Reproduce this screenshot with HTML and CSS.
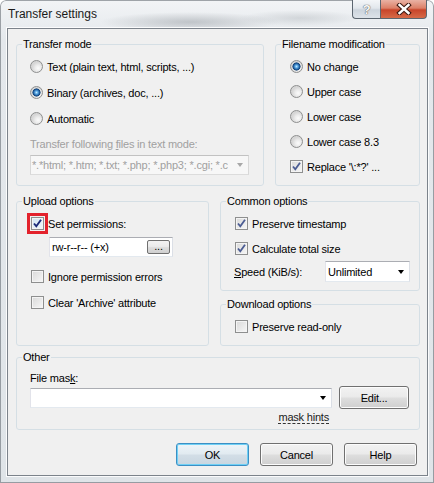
FILE: index.html
```html
<!DOCTYPE html>
<html lang="en">
<head>
  <meta charset="UTF-8">
  <title>Transfer settings</title>
  <link rel="stylesheet" href="styles.css">
</head>
<body>
  <div class="window">
    <div class="titlebar">
      <span class="title">Transfer settings</span>
      <div class="caption">
        <span class="cap-btn cap-help">?</span>
        <span class="cap-btn cap-close">
          <svg width="18" height="12" viewBox="0 0 18 12">
            <path d="M4.5 2 L13.5 10 M13.5 2 L4.5 10" stroke="#3d1a12" stroke-width="4.5" stroke-linecap="square"/>
            <path d="M4.5 2 L13.5 10 M13.5 2 L4.5 10" stroke="#fff" stroke-width="2.4" stroke-linecap="square"/>
          </svg>
        </span>
      </div>
    </div>

    <div class="client">
      <div class="row row-top">
        <fieldset class="group group-mode">
          <legend>Transfer mode</legend>
          <div class="body">
            <div class="opt"><span class="radio"></span>Text (plain text, html, scripts, ...)</div>
            <div class="opt"><span class="radio on"></span>Binary (archives, doc, ...)</div>
            <div class="opt"><span class="radio"></span>Automatic</div>
            <div class="muted">Transfer following <u>f</u>iles in text mode:</div>
            <div class="combo disabled combo-mask">
              <span class="val">*.*html; *.htm; *.txt; *.php; *.php3; *.cgi; *.c</span>
              <span class="arrow"></span>
            </div>
          </div>
        </fieldset>

        <fieldset class="group group-name">
          <legend>Filename modification</legend>
          <div class="body">
            <div class="opt"><span class="radio on"></span>No change</div>
            <div class="opt"><span class="radio"></span>Upper case</div>
            <div class="opt"><span class="radio"></span>Lower case</div>
            <div class="opt"><span class="radio"></span>Lower case 8.3</div>
            <div class="opt"><span class="check"><svg viewBox="0 0 11 11"><path d="M2 5.5 L4.3 8.3 L9 1.8" fill="none" stroke="#4b5c93" stroke-width="1.8"/></svg></span>Replace '\:*?' ...</div>
          </div>
        </fieldset>
      </div>

      <div class="row row-mid">
        <fieldset class="group group-upload">
          <legend>Upload options</legend>
          <div class="body">
            <div class="opt"><span class="check marked"><svg viewBox="0 0 11 11"><path d="M2 5.5 L4.3 8.3 L9 1.8" fill="none" stroke="#1b2a78" stroke-width="1.9"/></svg></span>Set permissions:</div>
            <div class="edit">
              <span class="val">rw-r--r-- (+x)</span>
              <span class="mini-btn">...</span>
            </div>
            <div class="opt"><span class="check"></span>Ignore permission errors</div>
            <div class="opt"><span class="check"></span>Clear 'Archive' attribute</div>
          </div>
        </fieldset>

        <div class="col-right">
          <fieldset class="group group-common">
            <legend>Common options</legend>
            <div class="body">
              <div class="opt"><span class="check"><svg viewBox="0 0 11 11"><path d="M2 5.5 L4.3 8.3 L9 1.8" fill="none" stroke="#4b5c93" stroke-width="1.8"/></svg></span>Preserve timestamp</div>
              <div class="opt"><span class="check"><svg viewBox="0 0 11 11"><path d="M2 5.5 L4.3 8.3 L9 1.8" fill="none" stroke="#4b5c93" stroke-width="1.8"/></svg></span>Calculate total size</div>
              <div class="speed">
                <span class="speed-label"><u>S</u>peed (KiB/s):</span>
                <div class="combo combo-speed">
                  <span class="val">Unlimited</span>
                  <span class="arrow"></span>
                </div>
              </div>
            </div>
          </fieldset>

          <fieldset class="group group-download">
            <legend>Download options</legend>
            <div class="body">
              <div class="opt"><span class="check"></span>Preserve read-only</div>
            </div>
          </fieldset>
        </div>
      </div>

      <fieldset class="group group-other">
        <legend>Other</legend>
        <div class="body">
          <div class="field-label">File mas<u>k</u>:</div>
          <div class="mask-row">
            <div class="mask-col">
              <div class="combo combo-file">
                <span class="val"></span>
                <span class="arrow"></span>
              </div>
              <div class="hints"><span class="link">mask hints</span></div>
            </div>
            <span class="btn btn-edit">Edit...</span>
          </div>
        </div>
      </fieldset>

      <div class="buttons">
        <span class="btn btn-default">OK</span>
        <span class="btn">Cancel</span>
        <span class="btn">Help</span>
      </div>
    </div>
  </div>
</body>
</html>
```

FILE: styles.css
```css
* {
  box-sizing: border-box;
}

body {
  margin: 0;
  background: #ffffff;
  font-family: "Liberation Sans", Arial, sans-serif;
  font-size: 11px;
  letter-spacing: -0.2px;
  color: #000;
}

/* window frame (aero glass) */
.window {
  width: 434px;
  height: 483px;
  display: flex;
  flex-direction: column;
  border-radius: 6px 6px 0 0;
  overflow: hidden;
  background:
    radial-gradient(ellipse 90px 10px at 190px 22px, rgba(140, 146, 152, 0.45), transparent),
    radial-gradient(ellipse 60px 8px at 300px 18px, rgba(160, 166, 172, 0.35), transparent),
    linear-gradient(#f2f4f6, #e4e8ec 40px, #dfe4e8);
  box-shadow: inset 0 0 0 1px rgba(90, 96, 104, 0.55);
}

.titlebar {
  height: 28px;
  flex: none;
  display: flex;
  justify-content: space-between;
  padding: 0 7px 0 8px;
}

.title {
  line-height: 28px;
  font-size: 12px;
  letter-spacing: 0;
  color: #1a1a1a;
}

.caption {
  display: flex;
  height: 19px;
}

.cap-btn {
  display: flex;
  align-items: center;
  justify-content: center;
  border: 1px solid #5c6670;
  border-top: none;
}

.cap-help {
  width: 28px;
  border-right: none;
  border-radius: 0 0 0 4px;
  background: linear-gradient(#f4f6f8, #e2e7ec 45%, #ccd4dc 55%, #dde3e9);
  color: #f8f8f8;
  font-size: 13px;
  font-weight: bold;
  text-shadow: 0 0 1px #555, 0 0 1px #555;
}

.cap-close {
  width: 47px;
  border-radius: 0 0 4px 0;
  background: linear-gradient(#e9b2a4, #dc8068 45%, #c8452a 55%, #d66a48);
}

/* client area */
.client {
  flex: 1;
  margin: 0 6px 7px 7px;
  padding: 9px 7px 0 8px;
  border: 1px solid #7c838b;
  background: #f0f0f0;
  box-shadow: 0 0 0 1px rgba(255, 255, 255, 0.85);
}

.row {
  display: flex;
  gap: 11px;
}

.row-mid {
  margin-top: 9px;
}

.col-right {
  display: flex;
  flex-direction: column;
  gap: 7px;
}

.group {
  margin: 0;
  padding: 0;
  min-width: 0;
  border: 1px solid #d5dfe5;
  border-radius: 3px;
}

.group legend {
  margin-left: 5px;
  padding: 0 1px;
  line-height: 13px;
}

.body {
  padding: 9px 0 0 14px;
}

.group-mode {
  width: 248px;
  height: 148px;
}

.group-mode .body {
  padding-left: 13px;
}

.group-mode .opt {
  margin-bottom: 13px;
}

.group-name {
  width: 145px;
  height: 148px;
}

.group-name .opt {
  margin-bottom: 12px;
}

.group-upload {
  width: 193px;
  height: 151px;
}

.group-common {
  width: 200px;
  height: 96px;
}

.group-download {
  width: 200px;
  height: 48px;
}

.group-other {
  width: 404px;
  height: 79px;
  margin-top: 5px;
}

.group-other .body {
  padding: 8px 0 0 13px;
}

/* options */
.opt {
  display: flex;
  align-items: center;
  gap: 4px;
  height: 13px;
  white-space: nowrap;
}

.radio {
  flex: none;
  width: 13px;
  height: 13px;
  border-radius: 50%;
  border: 1px solid #8e8f8f;
  background: radial-gradient(circle at 65% 65%, #fbfbfb 0, #ececec 3px, #d6d6d6 6px);
}

.radio.on {
  background:
    radial-gradient(circle at 50% 50%, #c2e8fd 0, #5aa8e4 1.5px, #1f5c9c 3px, #123f72 3.8px, transparent 4.3px),
    radial-gradient(circle at 65% 65%, #fbfbfb 0, #ececec 3px, #d6d6d6 6px);
}

.check {
  flex: none;
  display: flex;
  align-items: center;
  justify-content: center;
  width: 13px;
  height: 13px;
  border: 1px solid #8e8f8f;
  background: linear-gradient(135deg, #d9d9d9, #f7f7f7);
  box-shadow: inset 0 0 0 1px #f4f4f4;
}

.check svg {
  width: 11px;
  height: 11px;
}

.check.marked {
  background: linear-gradient(135deg, #cfe4f3, #f3f8fb);
  outline: 3px solid #e3222c;
  outline-offset: 1px;
}

.muted {
  margin-top: 12px;
  line-height: 13px;
  color: #a0a0a0;
  white-space: nowrap;
}

/* inputs */
.combo,
.edit {
  display: flex;
  align-items: center;
  background: #fff;
  border: 1px solid;
  border-color: #abadb3 #dbdfe6 #e3e9ef #e2e3ea;
}

.combo .val,
.edit .val {
  flex: 1;
  overflow: hidden;
  white-space: nowrap;
  padding-left: 3px;
}

.combo .arrow {
  flex: none;
  width: 17px;
  display: flex;
  justify-content: center;
}

.combo .arrow::after {
  content: "";
  border-left: 3.5px solid transparent;
  border-right: 3.5px solid transparent;
  border-top: 4px solid #000;
}

.combo.disabled {
  background: #f7f7f7;
  border-color: #c2c2c2 #d8d8d8 #dcdcdc #d8d8d8;
  color: #a0a0a0;
}

.combo.disabled .val {
  padding-left: 1px;
  margin-right: 3px;
}

.combo.disabled .arrow::after {
  border-top-color: #a8a8a8;
}

.combo-mask {
  width: 219px;
  height: 20px;
  margin-top: 4px;
}

.edit {
  width: 124px;
  height: 20px;
  margin: 7px 0 13px 18px;
  padding-right: 2px;
}

.edit .val {
  padding-left: 2px;
}

.mini-btn {
  width: 23px;
  height: 14px;
  line-height: 10px;
  text-align: center;
  border: 1px solid #707070;
  border-radius: 2px;
  background: linear-gradient(#f2f2f2, #ebebeb 45%, #dddddd 55%, #cfcfcf);
}

.group-upload .opt + .opt {
  margin-top: 13px;
}

.group-common .opt {
  margin-bottom: 12px;
}

.speed {
  display: flex;
  align-items: center;
  margin-top: -6px;
  margin-left: -1px;
}

.speed-label {
  width: 91px;
}

.combo-speed {
  width: 85px;
  height: 21px;
}

.combo-speed .val {
  padding-left: 2px;
}

.field-label {
  line-height: 13px;
}

.mask-row {
  display: flex;
  gap: 7px;
  margin-top: 1px;
}

.combo-file {
  width: 302px;
  height: 20px;
  margin-top: 2px;
}

.hints {
  text-align: right;
  padding-right: 3px;
  margin-top: 3px;
  line-height: 13px;
}

.link {
  color: #1a1a1a;
  text-decoration: underline dashed #333;
  text-underline-offset: 2px;
}

/* push buttons */
.btn {
  display: flex;
  align-items: center;
  justify-content: center;
  width: 73px;
  height: 23px;
  border: 1px solid #707070;
  border-radius: 3px;
  background: linear-gradient(#f2f2f2, #ebebeb 45%, #dddddd 55%, #cfcfcf);
  box-shadow: inset 0 0 0 1px #fcfcfc;
}

.btn-edit {
  width: 70px;
}

.btn-default {
  border-color: #3c8fc4;
  box-shadow: inset 0 0 0 1px #6fd0f5;
  background: linear-gradient(#eef4f8, #e2ebf1 45%, #d2dde6 55%, #c8d6e0);
}

.buttons {
  display: flex;
  justify-content: flex-end;
  gap: 11px;
  margin-top: 13px;
  padding-right: 3px;
}
```
